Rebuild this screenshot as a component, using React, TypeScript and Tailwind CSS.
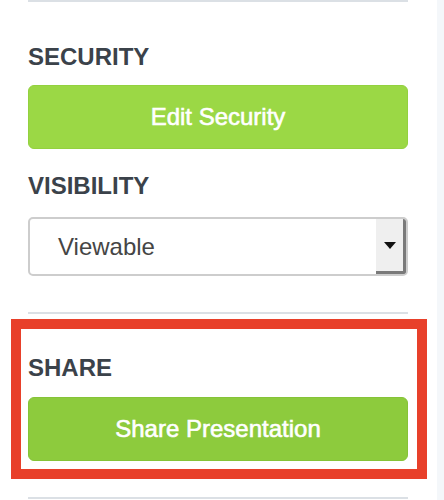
import { useState } from "react";

const font = { fontFamily: '"Liberation Sans", Arial, sans-serif' };

function SectionTitle({ children, className = "" }: { children: string; className?: string }) {
  return (
    <h3 className={`text-[24px] leading-[24px] font-bold text-[#3b424a] ${className}`}>{children}</h3>
  );
}

function GreenButton({ label, className = "" }: { label: string; className?: string }) {
  return (
    <button
      className={`w-full h-[64px] rounded-[6px] border text-white text-[24px] leading-none [-webkit-text-stroke:0.6px_white] ${className}`}
    >
      {label}
    </button>
  );
}

export default function App() {
  const [visibility] = useState("Viewable");

  return (
    <div className="flex w-[444px] h-[500px] bg-white overflow-hidden" style={font}>
      <div className="w-[437px] px-[28px] pr-[29px]">
        <div className="h-[2px] bg-[#dbe0e5]" />

        <SectionTitle className="mt-[43px]">SECURITY</SectionTitle>
        <GreenButton
          label="Edit Security"
          className="mt-[16px] bg-[#9bd845] border-[#93d13f]"
        />

        <SectionTitle className="mt-[25px]">VISIBILITY</SectionTitle>
        <div className="mt-[19px] h-[59px] flex rounded-[5px] border-2 border-[#cdcdcd] bg-white overflow-hidden">
          <div className="flex-1 flex items-center pl-[28px] text-[24px] text-[#454545]">
            {visibility}
          </div>
          <div className="w-[30px] flex items-center justify-center bg-[#efefef] border-r-[3px] border-b-[3px] border-[#7a7a7a]">
            <svg width="12" height="7" viewBox="0 0 12 7">
              <path d="M0 0h12L6 7z" fill="#111" />
            </svg>
          </div>
        </div>

        <div className="mt-[36px] h-[2px] bg-[#dbe0e5]" />

        <div className="mt-[5px] -ml-[17px] w-[416px] h-[160px] border-[10px] border-[#e8402a] pl-[7px] pr-[9px]">
          <SectionTitle className="mt-[27px]">SHARE</SectionTitle>
          <GreenButton
            label="Share Presentation"
            className="mt-[17px] bg-[#8dcb3d] border-[#86c338]"
          />
        </div>

        <div className="mt-[18px] h-[2px] bg-[#dbe0e5]" />
      </div>
      <div className="flex-1 bg-[#f4f7fa]" />
    </div>
  );
}
